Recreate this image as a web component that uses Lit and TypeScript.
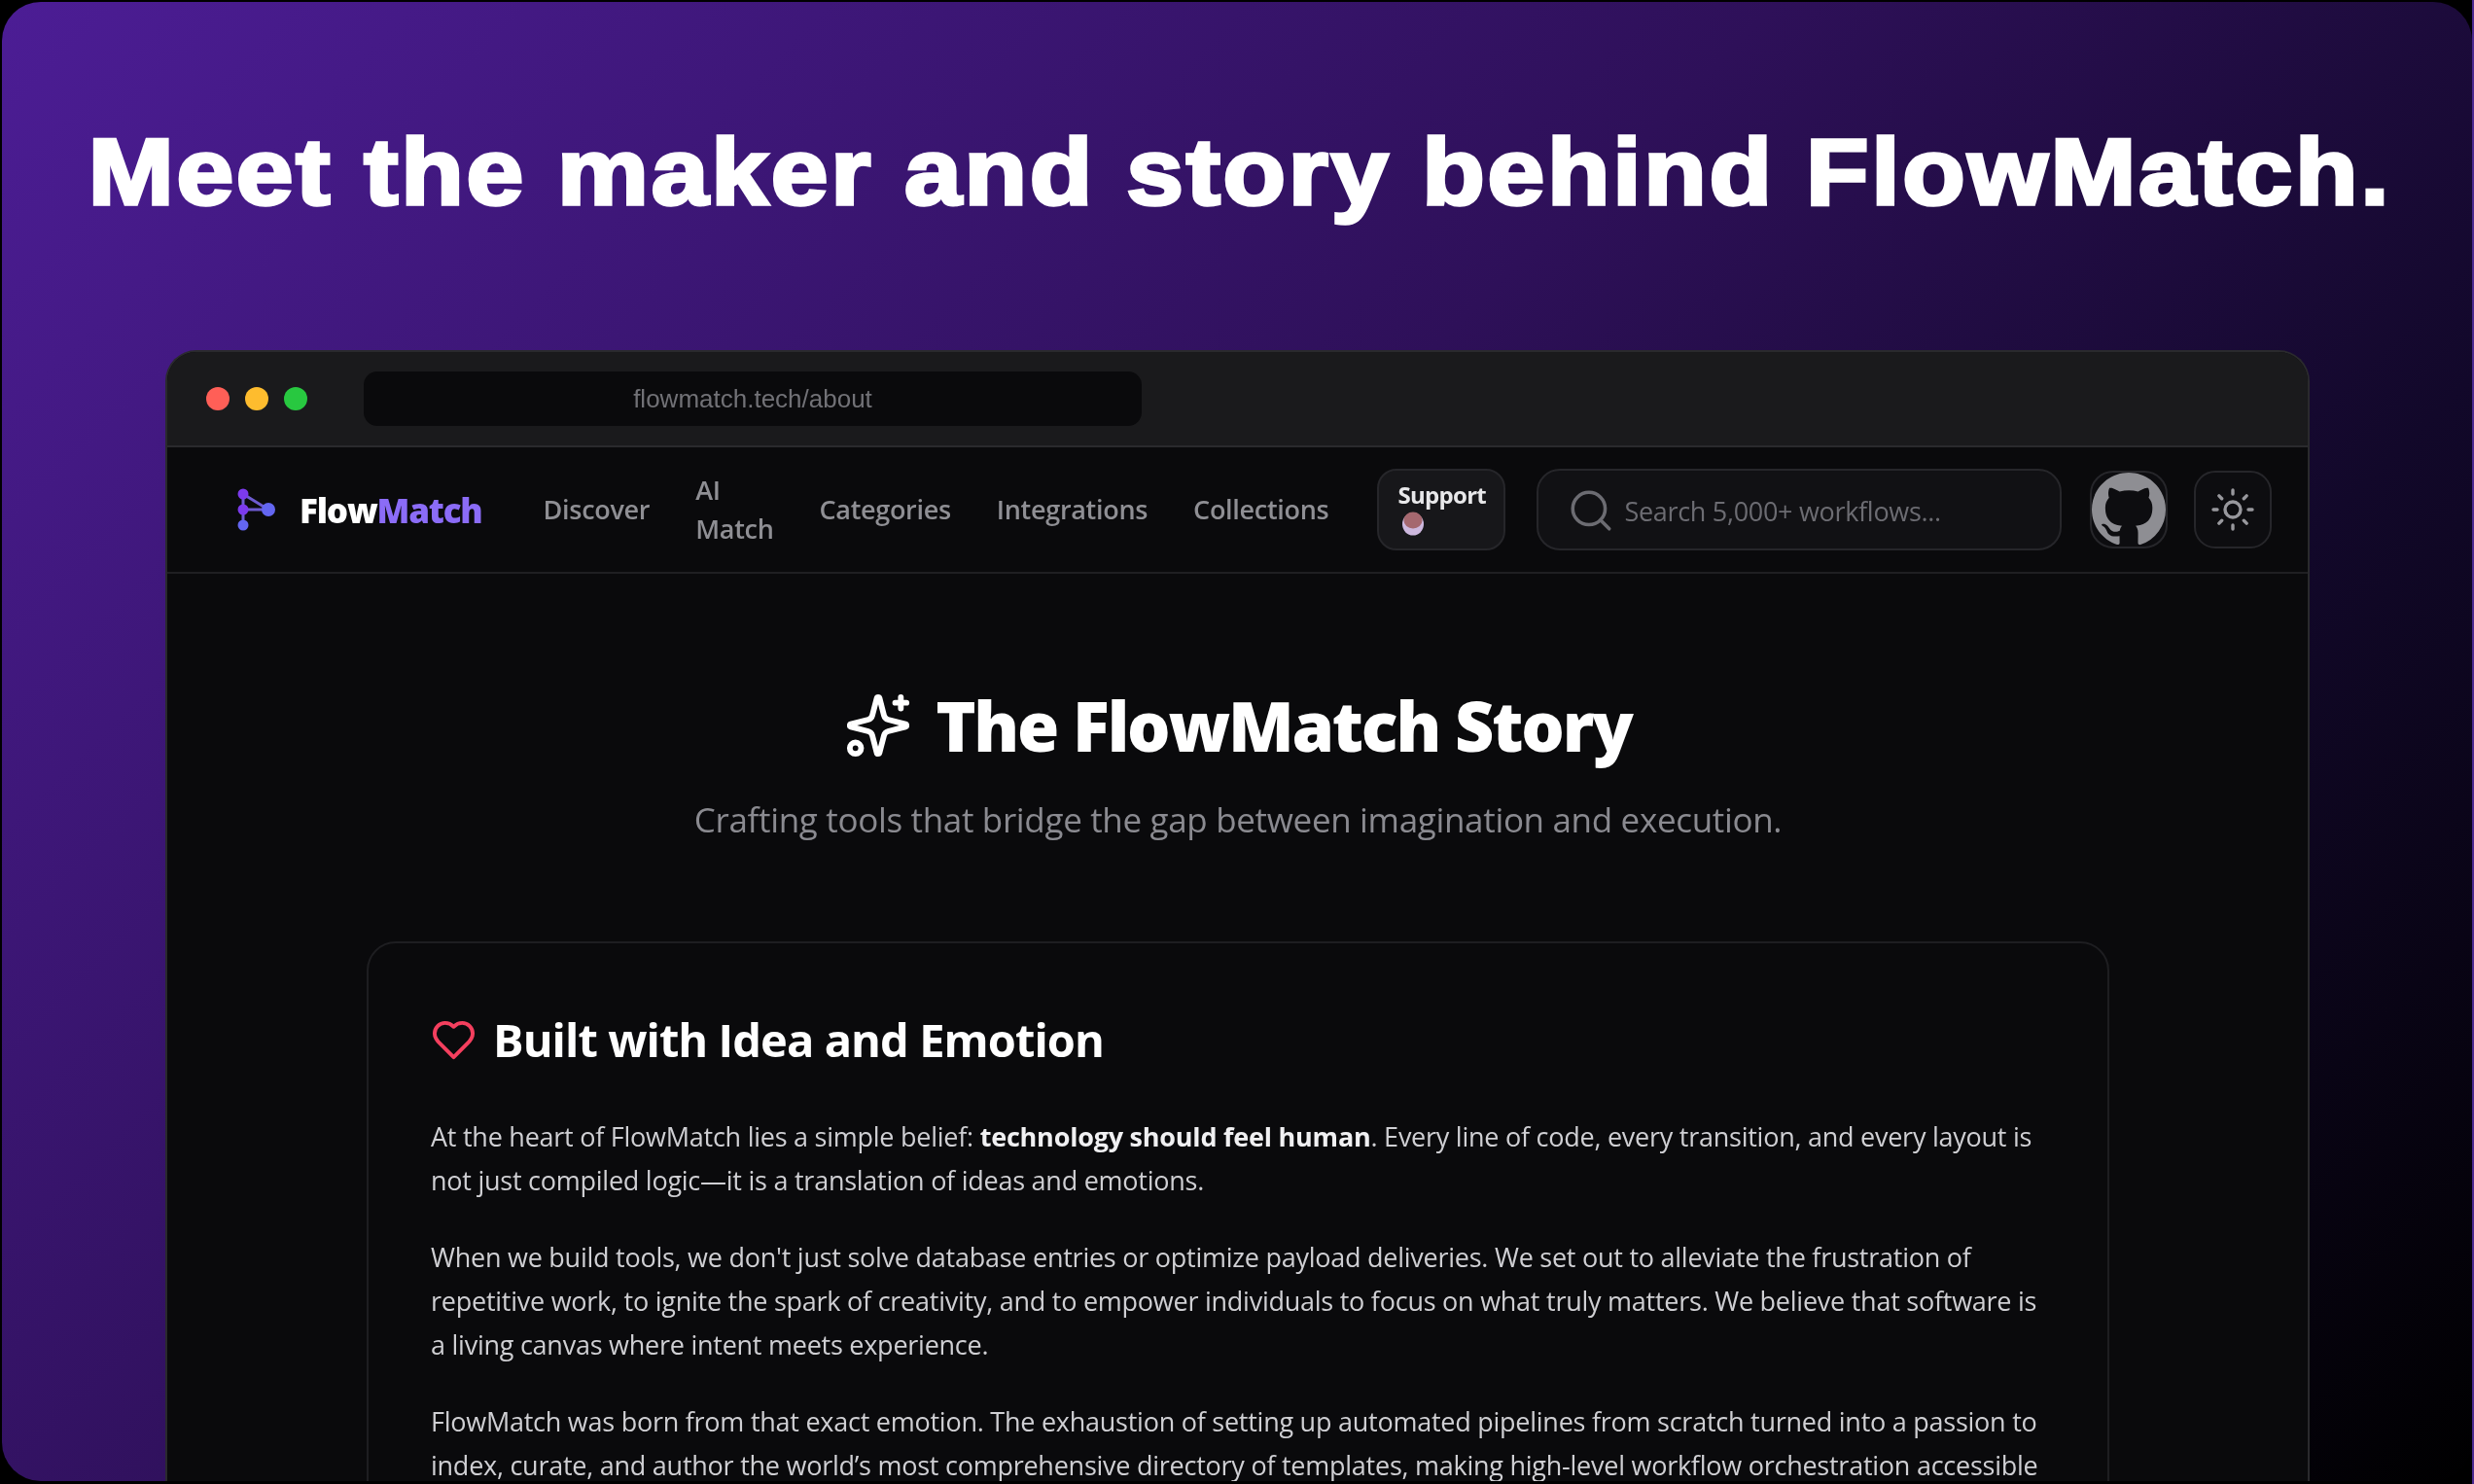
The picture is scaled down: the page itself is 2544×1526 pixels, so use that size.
import { LitElement, css, html } from "lit";
import { customElement } from "lit/decorators.js";

const NAV_LINKS = ["Discover", "AI Match", "Categories", "Integrations", "Collections"];

@customElement("app-root")
export class AppRoot extends LitElement {
  static styles = css`
    :host {
      display: block;
      box-sizing: border-box;
      width: 2544px;
      height: 1526px;
      overflow: hidden;
      background: #000;
      border-right: 2px solid #4c2a8f;
    }
    .frame {
      box-sizing: border-box;
      width: 2540px;
      height: 1521px;
      margin: 2px 0 0 2px;
      padding: 0 0 0 168px;
      border-radius: 40px;
      overflow: hidden;
      background: linear-gradient(135deg, #4c1d95 0%, #2e1059 45%, #12082a 72%, #000 100%);
    }
    h1.headline {
      margin: 0 0 0 -162px;
      height: 358px;
      padding-top: 127px;
      box-sizing: border-box;
      text-align: center;
      font: 900 96px/1 "Liberation Sans", Arial, sans-serif;
      letter-spacing: 2.5px;
      color: #fff;
      -webkit-text-stroke: 3.5px #fff;
      white-space: nowrap;
      transform: scaleX(1.1);
    }
    .window {
      width: 2205px;
      height: 1170px;
      box-sizing: border-box;
      border: 2px solid #2a2a2d;
      border-bottom: 0;
      border-radius: 32px 32px 0 0;
      overflow: hidden;
      background: #0a0a0c;
      font-family: "Open Sans", "Noto Sans", sans-serif;
      filter: blur(0.5px);
    }
    .titlebar {
      display: flex;
      align-items: center;
      height: 96px;
      padding-left: 40px;
      background: #1a1a1c;
      border-bottom: 2px solid #2a2a2d;
    }
    .dots { display: flex; gap: 16px; }
    .dot { width: 24px; height: 24px; border-radius: 50%; }
    .dot.red { background: #ff5f57; }
    .dot.amber { background: #febc2e; }
    .dot.green { background: #28c840; }
    .url {
      width: 800px;
      height: 56px;
      margin-left: 58px;
      border-radius: 14px;
      background: #0a0a0c;
      color: #717176;
      font: 26px/56px "Liberation Sans", Arial, sans-serif;
      text-align: center;
    }
    .nav {
      display: flex;
      align-items: center;
      height: 128px;
      padding: 0 26px 0 64px;
      border-bottom: 2px solid #1f1f22;
    }
    .logo { display: flex; align-items: center; gap: 24px; margin-right: 63px; }
    .brand {
      font-size: 35px;
      font-weight: 800;
      letter-spacing: -1.2px;
      color: #fff;
    }
    .brand span { color: #8b6cf7; }
    .links { display: flex; align-items: center; gap: 47px; }
    .links a {
      width: min-content;
      font-size: 27px;
      font-weight: 600;
      line-height: 40px;
      letter-spacing: -0.3px;
      color: #8f8f94;
      white-space: normal;
    }
    .links a.nowrap { white-space: nowrap; }
    .support {
      display: flex;
      flex-direction: column;
      align-items: flex-start;
      box-sizing: border-box;
      width: 132px;
      height: 84px;
      margin-left: 50px;
      padding: 9px 0 0 19px;
      border: 2px solid #26262a;
      border-radius: 20px;
      background: #17171a;
      color: #e8e8ea;
      font-size: 24px;
      font-weight: 700;
      line-height: 32px;
      letter-spacing: -0.7px;
    }
    .cup { margin-left: 4px; }
    .search {
      display: flex;
      align-items: center;
      gap: 9px;
      box-sizing: border-box;
      width: 540px;
      height: 84px;
      margin-left: 32px;
      padding: 2px 0 0 29px;
      border: 2px solid #26262a;
      border-radius: 24px;
      background: #111114;
      color: #6c6c72;
      font-size: 27px;
      letter-spacing: -0.3px;
    }
    .github {
      box-sizing: border-box;
      width: 80px;
      height: 80px;
      margin-left: 29px;
      border: 2px solid #26262a;
      border-radius: 24px;
      background: #0d0d10;
      overflow: hidden;
    }
    .github svg { display: block; }
    .theme {
      display: flex;
      align-items: center;
      justify-content: center;
      box-sizing: border-box;
      width: 80px;
      height: 80px;
      margin-left: 27px;
      border: 2px solid #26262a;
      border-radius: 22px;
      background: #0d0d10;
      color: #98989d;
    }
    .content { padding: 120px 0 0 205px; }
    .hero { width: 1792px; text-align: center; }
    .hero h2 {
      display: flex;
      align-items: center;
      justify-content: center;
      gap: 24px;
      margin: 0;
      height: 72px;
      font-size: 70px;
      font-weight: 800;
      letter-spacing: -2.2px;
      color: #fff;
    }
    .hero p {
      margin: 37px 0 0;
      font-size: 35px;
      line-height: 48px;
      letter-spacing: -0.33px;
      color: #8a8a90;
    }
    .card {
      box-sizing: border-box;
      width: 1792px;
      height: 700px;
      margin-top: 101px;
      padding: 69px 64px 0;
      border: 2px solid #1e1e21;
      border-radius: 30px;
    }
    .card h3 {
      display: flex;
      align-items: center;
      gap: 17px;
      margin: 0 0 47px;
      height: 60px;
      font-size: 47px;
      font-weight: 700;
      letter-spacing: -0.93px;
      color: #fff;
    }
    .card p {
      margin: 0 0 34px;
      font-size: 27px;
      line-height: 45px;
      letter-spacing: -0.25px;
      color: #cfcfd3;
      white-space: nowrap;
    }
    .card strong { color: #f0f0f2; font-weight: 700; letter-spacing: -0.22px; }
  `;

  render() {
    return html`
      <div class="frame">
        <h1 class="headline">Meet the maker and story behind FlowMatch.</h1>
        <div class="window">
          <div class="titlebar">
            <div class="dots">
              <div class="dot red"></div>
              <div class="dot amber"></div>
              <div class="dot green"></div>
            </div>
            <div class="url">flowmatch.tech/about</div>
          </div>
          <div class="nav">
            <div class="logo">
              <svg width="48" height="60" viewBox="0 0 48 60">
                <path d="M14 14 40 30M14 30H40M14 14V46" stroke="#6d5bd0" stroke-width="3" fill="none" />
                <circle cx="14" cy="14" r="5.5" fill="#7c3aed" />
                <circle cx="14" cy="30" r="5.5" fill="#7c3aed" />
                <circle cx="14" cy="46" r="5.5" fill="#6366f1" />
                <circle cx="40" cy="30" r="7" fill="#6366f1" />
              </svg>
              <div class="brand">Flow<span>Match</span></div>
            </div>
            <div class="links">
              ${NAV_LINKS.map((l) => html`<a class=${l === "AI Match" ? "" : "nowrap"}>${l}</a>`)}
            </div>
            <div class="support">
              Support
              <svg class="cup" width="24" height="26" viewBox="0 0 24 26">
                <ellipse cx="12" cy="14" rx="11" ry="11.5" fill="#cdb8de" />
                <ellipse cx="12" cy="10" rx="9.5" ry="8.5" fill="#a5686f" />
              </svg>
            </div>
            <div class="search">
              <svg width="50" height="50" viewBox="0 0 24 24" fill="none" stroke="currentColor" stroke-width="1.7" stroke-linecap="round" stroke-linejoin="round">
                <circle cx="11" cy="11" r="8" /><path d="m21 21-4.3-4.3" />
              </svg>
              Search 5,000+ workflows...
            </div>
            <div class="github">
              <svg width="76" height="76" viewBox="0 0 16 16">
                <path fill="#8e8e93" d="M8 0C3.58 0 0 3.58 0 8c0 3.54 2.29 6.53 5.47 7.59.4.07.55-.17.55-.38 0-.19-.01-.82-.01-1.49-2.01.37-2.53-.49-2.69-.94-.09-.23-.48-.94-.82-1.13-.28-.15-.68-.52-.01-.53.63-.01 1.08.58 1.23.82.72 1.21 1.87.87 2.33.66.07-.52.28-.87.51-1.07-1.78-.2-3.64-.89-3.64-3.95 0-.87.31-1.59.82-2.15-.08-.2-.36-1.02.08-2.12 0 0 .67-.21 2.2.82.64-.18 1.32-.27 2-.27s1.36.09 2 .27c1.53-1.04 2.2-.82 2.2-.82.44 1.1.16 1.92.08 2.12.51.56.82 1.27.82 2.15 0 3.07-1.87 3.75-3.65 3.95.29.25.54.73.54 1.48 0 1.07-.01 1.93-.01 2.2 0 .21.15.46.55.38A8.013 8.013 0 0016 8c0-4.42-3.58-8-8-8z" />
              </svg>
            </div>
            <div class="theme">
              <svg width="48" height="48" viewBox="0 0 24 24" fill="none" stroke="currentColor" stroke-width="1.7" stroke-linecap="round" stroke-linejoin="round">
                <circle cx="12" cy="12" r="4" />
                <path d="M12 2v2M12 20v2M4.93 4.93l1.41 1.41M17.66 17.66l1.41 1.41M2 12h2M20 12h2M6.34 17.66l-1.41 1.41M19.07 4.93l-1.41 1.41" />
              </svg>
            </div>
          </div>
          <div class="content">
            <div class="hero">
              <h2>
                <svg width="70" height="70" viewBox="0 0 24 24" fill="none" stroke="#fff" stroke-width="2" stroke-linecap="round" stroke-linejoin="round">
                  <path d="M9.937 15.5A2 2 0 0 0 8.5 14.063l-6.135-1.582a.5.5 0 0 1 0-.962L8.5 9.936A2 2 0 0 0 9.937 8.5l1.582-6.135a.5.5 0 0 1 .963 0L14.063 8.5A2 2 0 0 0 15.5 9.937l6.135 1.581a.5.5 0 0 1 0 .964L15.5 14.063a2 2 0 0 0-1.437 1.437l-1.582 6.135a.5.5 0 0 1-.963 0z" />
                  <path d="M20 2v4M22 4h-4" />
                  <circle cx="4" cy="20" r="2" />
                </svg>
                The FlowMatch Story
              </h2>
              <p>Crafting tools that bridge the gap between imagination and execution.</p>
            </div>
            <div class="card">
              <h3>
                <svg width="47" height="47" viewBox="0 0 24 24" fill="none" stroke="#f43f5e" stroke-width="2" stroke-linecap="round" stroke-linejoin="round">
                  <path d="M19 14c1.49-1.46 3-3.21 3-5.5A5.5 5.5 0 0 0 16.5 3c-1.76 0-3 .5-4.5 2-1.5-1.5-2.74-2-4.5-2A5.5 5.5 0 0 0 2 8.5c0 2.3 1.5 4.05 3 5.5l7 7Z" />
                </svg>
                Built with Idea and Emotion
              </h3>
              <p>
                At the heart of FlowMatch lies a simple belief: <strong>technology should feel human</strong>. Every line of code, every transition, and every layout is<br />
                not just compiled logic—it is a translation of ideas and emotions.
              </p>
              <p>
                When we build tools, we don't just solve database entries or optimize payload deliveries. We set out to alleviate the frustration of<br />
                repetitive work, to ignite the spark of creativity, and to empower individuals to focus on what truly matters. We believe that software is<br />
                a living canvas where intent meets experience.
              </p>
              <p>
                FlowMatch was born from that exact emotion. The exhaustion of setting up automated pipelines from scratch turned into a passion to<br />
                index, curate, and author the world’s most comprehensive directory of templates, making high-level workflow orchestration accessible
              </p>
            </div>
          </div>
        </div>
      </div>
    `;
  }
}
